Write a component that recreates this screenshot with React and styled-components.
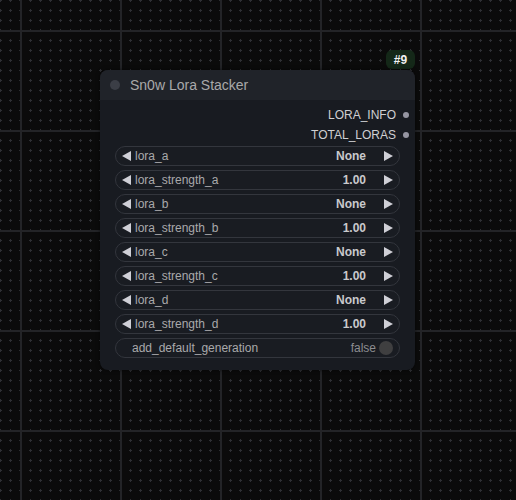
import styled, { createGlobalStyle } from "styled-components"

const GlobalStyle = createGlobalStyle`
  html, body {
    margin: 0;
    padding: 0;
    background: #0b0b0b;
  }
  * {
    box-sizing: border-box;
  }
`

const Canvas = styled.div`
  position: relative;
  width: 516px;
  height: 500px;
  overflow: hidden;
  font-family: "Liberation Sans", Arial, sans-serif;
  background-color: #0b0b0b;
  background-image:
    linear-gradient(to right, #232427 2px, transparent 2px),
    linear-gradient(to bottom, #232427 2px, transparent 2px),
    radial-gradient(circle at 2.5px 2.5px, #2e2f33 1px, transparent 1.4px);
  background-size: 100px 100px, 100px 100px, 10px 10px;
  background-position: 20px 0, 0 30px, -2px -2px;
`

const Badge = styled.div`
  position: absolute;
  left: 386px;
  top: 50px;
  width: 29px;
  height: 19px;
  border-radius: 6px;
  background: #142818;
  color: #f2f2f2;
  font-weight: bold;
  font-size: 12px;
  display: flex;
  align-items: center;
  justify-content: center;
`

const Node = styled.div`
  position: absolute;
  left: 100px;
  top: 70px;
  width: 315px;
  border-radius: 8px;
  background: #181b21;
  box-shadow: 0 0 4px rgba(0, 0, 0, 0.6);
  overflow: hidden;
`

const Title = styled.div`
  height: 30px;
  background: #202329;
  display: flex;
  align-items: center;
  padding-left: 10px;
  gap: 10px;
  color: #a9a9a9;
  font-size: 14px;
`

const TitleDot = styled.span`
  width: 10px;
  height: 10px;
  border-radius: 50%;
  background: #3b3e46;
`

const Body = styled.div`
  padding: 4px 0 12px;
  display: flex;
  flex-direction: column;
`

const OutputRow = styled.div`
  height: 20px;
  padding-top: 1px;
  display: flex;
  align-items: center;
  justify-content: flex-end;
  padding-right: 6px;
  gap: 7px;
  color: #cfcfd2;
  font-size: 12px;
`

const OutDot = styled.span`
  width: 6px;
  height: 6px;
  border-radius: 50%;
  background: #9696a2;
`

const Widgets = styled.div`
  margin-top: 2px;
  padding: 0 15px;
  display: flex;
  flex-direction: column;
  gap: 4px;
`

const Widget = styled.div`
  height: 20px;
  border: 1px solid #33363d;
  border-radius: 10px;
  background: #191c22;
  display: flex;
  align-items: center;
  padding: 0 6px 0 ${(p) => (p.$toggle ? "16px" : "6px")};
  font-size: 12px;
  color: #a9a9ab;
`

const Arrow = styled.span`
  width: 0;
  height: 0;
  border-top: 5px solid transparent;
  border-bottom: 5px solid transparent;
  ${(p) =>
    p.$right
      ? "border-left: 9px solid #cfcfd6; margin-left: 18px;"
      : "border-right: 9px solid #cfcfd6; margin-right: 4px;"}
`

const Label = styled.span`
  flex: 1;
`

const Value = styled.span`
  color: ${(p) => (p.$muted ? "#8d8d90" : "#c9c9cc")};
  font-weight: ${(p) => (p.$muted ? "normal" : "bold")};
`

const Knob = styled.span`
  width: 14px;
  height: 14px;
  border-radius: 50%;
  background: #3f3f40;
  margin-left: 3px;
`

const widgets = [
  ["lora_a", "None"],
  ["lora_strength_a", "1.00"],
  ["lora_b", "None"],
  ["lora_strength_b", "1.00"],
  ["lora_c", "None"],
  ["lora_strength_c", "1.00"],
  ["lora_d", "None"],
  ["lora_strength_d", "1.00"],
]

export default function App() {
  return (
    <>
      <GlobalStyle />
      <Canvas>
        <Badge>#9</Badge>
        <Node>
          <Title>
            <TitleDot />
            Sn0w Lora Stacker
          </Title>
          <Body>
            <OutputRow>
              LORA_INFO <OutDot />
            </OutputRow>
            <OutputRow>
              TOTAL_LORAS <OutDot />
            </OutputRow>
            <Widgets>
              {widgets.map(([name, value]) => (
                <Widget key={name}>
                  <Arrow />
                  <Label>{name}</Label>
                  <Value>{value}</Value>
                  <Arrow $right />
                </Widget>
              ))}
              <Widget $toggle>
                <Label>add_default_generation</Label>
                <Value $muted>false</Value>
                <Knob />
              </Widget>
            </Widgets>
          </Body>
        </Node>
      </Canvas>
    </>
  )
}
